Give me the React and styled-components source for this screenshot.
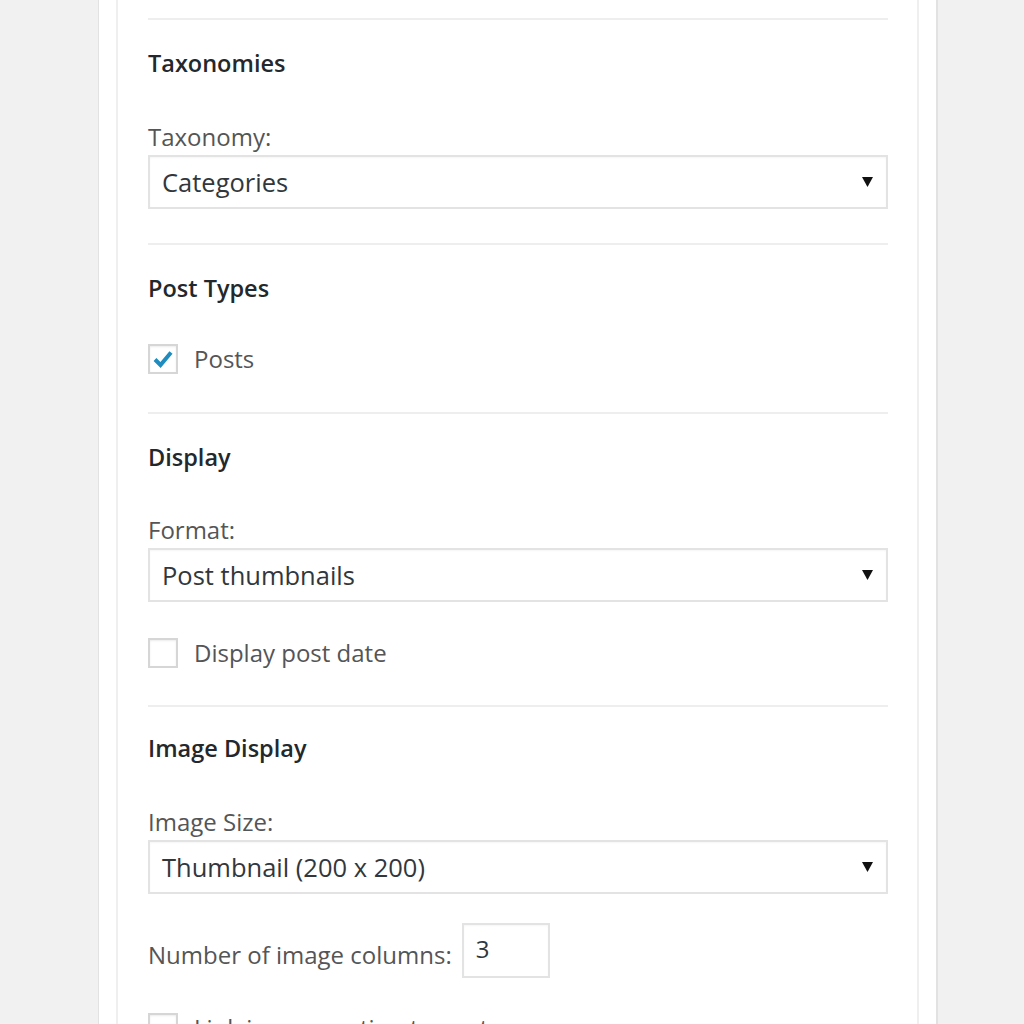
import styled, { createGlobalStyle } from 'styled-components';

const GlobalStyle = createGlobalStyle`
  html, body {
    margin: 0;
    padding: 0;
    background: #f1f1f1;
  }
  body {
    font-family: "Open Sans", "Noto Sans", sans-serif;
    color: #444;
  }
`;

const Page = styled.div`
  height: 1024px;
  overflow: hidden;
  padding-left: 98px;
  box-sizing: border-box;
`;

const Panel = styled.div`
  width: 840px;
  height: 100%;
  box-sizing: border-box;
  background: #fff;
  border-left: 1px solid #e2e2e2;
  border-right: 2px solid #e2e2e2;
  padding: 0 17px;
`;

const Widget = styled.div`
  height: 100%;
  box-sizing: border-box;
  border-left: 2px solid #efefef;
  border-right: 2px solid #efefef;
  padding: 18px 29px 0 30px;
`;

const Section = styled.section`
  border-top: 2px solid #eeeeee;
  padding: ${({ $top }) => $top}px 0 ${({ $bottom }) => $bottom}px;
`;

const Heading = styled.h4`
  margin: 0 0 ${({ $gap }) => $gap}px;
  font-size: 23.5px;
  line-height: 30px;
  font-weight: 600;
  color: #23282d;
`;

const Label = styled.label`
  display: block;
  font-size: 24px;
  line-height: 30px;
  color: #555;
`;

const SelectBox = styled.div`
  margin-top: 3px;
  height: 54px;
  box-sizing: border-box;
  border: 2px solid #e3e3e3;
  box-shadow: inset 0 1px 2px rgba(0, 0, 0, 0.04);
  display: flex;
  align-items: center;
  justify-content: space-between;
  padding: 0 13px 0 12px;
  font-size: 25.5px;
  color: #32373c;
  background: #fff;
`;

const Arrow = () => (
  <svg width="11" height="12" viewBox="0 0 11 12">
    <polygon points="0,1 11,1 5.5,11" fill="#111" />
  </svg>
);

const CheckRow = styled.div`
  margin-top: ${({ $gap }) => $gap}px;
  display: flex;
  align-items: center;
  gap: 16px;
  font-size: 24px;
  line-height: 30px;
  color: #555;
`;

const Box = styled.span`
  width: 30px;
  height: 30px;
  flex: none;
  box-sizing: border-box;
  border: 2px solid #d6d6d6;
  box-shadow: inset 0 1px 2px rgba(0, 0, 0, 0.08);
  background: #fff;
  display: flex;
  align-items: center;
  justify-content: center;
`;

const Check = () => (
  <svg width="22" height="20" viewBox="0 0 22 20">
    <path d="M3 10.5 L8.5 16 L19 3.5" stroke="#1e8cbe" strokeWidth="4" fill="none" />
  </svg>
);

const InlineRow = styled.div`
  margin-top: 29px;
  display: flex;
  align-items: center;
  gap: 10px;
  font-size: 24px;
  line-height: 30px;
  color: #555;
`;

const InlineLabel = styled.span`
  padding-top: 8px;
`;

const NumberBox = styled.div`
  width: 88px;
  height: 55px;
  flex: none;
  box-sizing: border-box;
  border: 2px solid #e3e3e3;
  box-shadow: inset 0 1px 2px rgba(0, 0, 0, 0.04);
  padding: 9px 12px 0;
  font-size: 24px;
  line-height: 30px;
  color: #32373c;
`;

function Checkbox({ checked, label, gap }) {
  return (
    <CheckRow $gap={gap}>
      <Box>{checked && <Check />}</Box>
      <span>{label}</span>
    </CheckRow>
  );
}

function Select({ value }) {
  return (
    <SelectBox>
      <span>{value}</span>
      <Arrow />
    </SelectBox>
  );
}

export default function App() {
  return (
    <Page>
      <GlobalStyle />
      <Panel>
        <Widget>
          <Section $top={28} $bottom={34}>
            <Heading $gap={44}>Taxonomies</Heading>
            <Label>Taxonomy:</Label>
            <Select value="Categories" />
          </Section>
          <Section $top={28} $bottom={38}>
            <Heading $gap={0}>Post Types</Heading>
            <Checkbox checked label="Posts" gap={41} />
          </Section>
          <Section $top={28} $bottom={37}>
            <Heading $gap={43}>Display</Heading>
            <Label>Format:</Label>
            <Select value="Post thumbnails" />
            <Checkbox label="Display post date" gap={36} />
          </Section>
          <Section $top={26} $bottom={0}>
            <Heading $gap={44}>Image Display</Heading>
            <Label>Image Size:</Label>
            <Select value="Thumbnail (200 x 200)" />
            <InlineRow>
              <InlineLabel>Number of image columns:</InlineLabel>
              <NumberBox>3</NumberBox>
            </InlineRow>
            <Checkbox label="Link image caption to post" gap={35} />
          </Section>
        </Widget>
      </Panel>
    </Page>
  );
}
